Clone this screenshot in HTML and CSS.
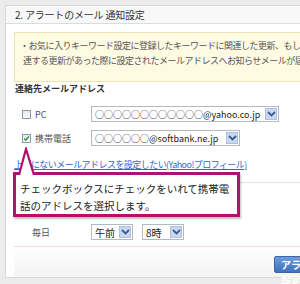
FILE: index.html
```html
<!DOCTYPE html>
<html lang="ja">
<head>
<meta charset="utf-8">
<link rel="stylesheet" href="styles.css">
</head>
<body>
<div class="panel">
  <div class="header">2. アラートのメール 通知設定</div>
  <div class="content">
    <div class="notice">・お気に入りキーワード設定に登録したキーワードに関連した更新、もしくは関<br>&nbsp;&nbsp;連する更新があった際に設定されたメールアドレスへお知らせメールが届きます。</div>
    <div class="heading">連絡先メールアドレス</div>
    <div class="rows">
      <div class="row">
        <span class="cb"></span><span class="label">PC</span>
        <span class="select wide"><span class="val">○○○○○○○○○○○○@yahoo.co.jp</span><span class="arrow"><svg width="9" height="6" viewBox="0 0 9 6"><path d="M1 1l3.5 3.5L8 1" fill="none" stroke="#3f5a8c" stroke-width="1.8"/></svg></span></span>
      </div>
      <div class="row">
        <span class="cb checked"><svg width="9" height="9" viewBox="0 0 9 9"><path d="M1.5 4.5l2 2.2L7.5 2" fill="none" stroke="#2c9a2c" stroke-width="1.8"/></svg></span><span class="label">携帯電話</span>
        <span class="select mid"><span class="val">○○○○○○@softbank.ne.jp</span><span class="arrow"><svg width="9" height="6" viewBox="0 0 9 6"><path d="M1 1l3.5 3.5L8 1" fill="none" stroke="#3f5a8c" stroke-width="1.8"/></svg></span></span>
      </div>
    </div>
    <a class="link" href="#">上記にないメールアドレスを設定したい(Yahoo!プロフィール)</a>
    <div class="divider"></div>
    <div class="timing">
      <span class="tlabel">毎日</span>
      <span class="select small"><span class="val">午前</span><span class="arrow"><svg width="9" height="6" viewBox="0 0 9 6"><path d="M1 1l3.5 3.5L8 1" fill="none" stroke="#3f5a8c" stroke-width="1.8"/></svg></span></span>
      <span class="select small"><span class="val">8時</span><span class="arrow"><svg width="9" height="6" viewBox="0 0 9 6"><path d="M1 1l3.5 3.5L8 1" fill="none" stroke="#3f5a8c" stroke-width="1.8"/></svg></span></span>
    </div>
  </div>
  <div class="footer">
    <span class="button">アラートを設定する</span>
  </div>
  <div class="callout">
    <svg class="pointer" width="20" height="28" viewBox="0 0 20 28"><path d="M1 28L8 2L16 28" fill="#fff" stroke="#b0126c" stroke-width="2.2" stroke-linejoin="miter"/></svg>
    <div class="ctext">チェックボックスにチェックをいれて携帯電<br>話のアドレスを選択します。</div>
  </div>
</div>
</body>
</html>
```
FILE: styles.css
```css
html, body {
  margin: 0;
  padding: 0;
}
body {
  width: 300px;
  height: 284px;
  overflow: hidden;
  background: #ececec;
  font-family: "Noto Sans CJK JP", "Noto Sans", sans-serif;
  color: #333;
}
.panel {
  position: relative;
  margin: 5px 0 0 5px;
  width: 340px;
  height: 271px;
  background: #fff;
  border: 1px solid #d9d9d9;
  border-right: none;
}
.header {
  height: 17px;
  line-height: 17px;
  font-size: 10px;
  padding-left: 9px;
  background: #f8f8f8;
  border-bottom: 1px solid #dcdcdc;
  color: #333;
  letter-spacing: -0.2px;
}
.content {
  padding-left: 8px;
}
.notice {
  margin-top: 8px;
  height: 43px;
  padding: 5px 0 0 5px;
  background: #fffbe3;
  border: 1px solid #ece2b4;
  border-right: none;
  font-size: 9px;
  line-height: 15px;
  white-space: nowrap;
  color: #555;
  letter-spacing: -0.5px;
}
.heading {
  margin-top: 1px;
  padding-left: 1px;
  font-size: 9px;
  line-height: 12px;
  font-weight: bold;
  color: #333;
}
.rows {
  margin-top: 11px;
  display: flex;
  flex-direction: column;
  gap: 8px;
}
.row {
  display: flex;
  align-items: center;
  height: 16px;
}
.cb {
  box-sizing: border-box;
  width: 9px;
  height: 9px;
  margin-left: 8px;
  border: 1px solid #8d99a6;
  background: linear-gradient(#e4e8ee, #fafbfc);
  display: flex;
  align-items: center;
  justify-content: center;
}
.cb svg {
  display: block;
}
.label {
  width: 56px;
  padding-left: 4px;
  font-size: 9px;
  color: #555;
}
.select {
  box-sizing: border-box;
  height: 16px;
  border: 1px solid #b4b9c0;
  background: #fff;
  display: flex;
  align-items: center;
  justify-content: space-between;
  padding: 0 1px 0 3px;
  font-size: 9px;
  color: #222;
  white-space: nowrap;
}
.select.wide { width: 188px; }
.select.mid { width: 149px; }
.select.small { width: 42px; font-size: 10px; }
.arrow {
  box-sizing: border-box;
  width: 12px;
  height: 12px;
  background: #c8d8f3;
  border: 1px solid #aebfe2;
  display: flex;
  align-items: center;
  justify-content: center;
}
.arrow svg { display: block; }
.link {
  display: block;
  margin-top: 13px;
  font-size: 9px;
  line-height: 12px;
  color: #3366cc;
  text-decoration: underline;
  white-space: nowrap;
  letter-spacing: -0.55px;
}
.divider {
  margin-top: 11px;
  height: 1px;
  background: #e0e0e0;
}
.timing {
  margin-top: 41px;
  display: flex;
  align-items: center;
  gap: 9px;
  height: 16px;
}
.tlabel {
  width: 59px;
  padding-left: 18px;
  font-size: 9px;
  color: #555;
}
.timing .tlabel { margin-right: -9px; }
.footer {
  margin-top: 6px;
  margin-left: 8px;
  border-top: 1px solid #eadcdc;
  height: 31px;
  background: linear-gradient(#fff, #f4f4f4);
  padding-top: 9px;
  box-sizing: border-box;
}
.button {
  display: inline-block;
  margin-left: 260px;
  height: 15px;
  line-height: 15px;
  padding: 0 6px;
  font-size: 10px;
  font-weight: bold;
  color: #fff;
  background: linear-gradient(#6a9be0, #3f72bd);
  border: 1px solid #3a66a8;
  border-radius: 2px;
}
.callout {
  position: absolute;
  left: 7px;
  top: 166px;
  width: 221px;
  height: 39px;
  border: 3px solid #b0126c;
  background: #fff;
  box-shadow: 1px 2px 2px rgba(0,0,0,0.25);
}
.pointer {
  position: absolute;
  left: 2px;
  top: -28px;
}
.ctext {
  padding: 5px 0 0 4px;
  font-size: 10.5px;
  line-height: 17px;
  color: #222;
  white-space: nowrap;
}
```
